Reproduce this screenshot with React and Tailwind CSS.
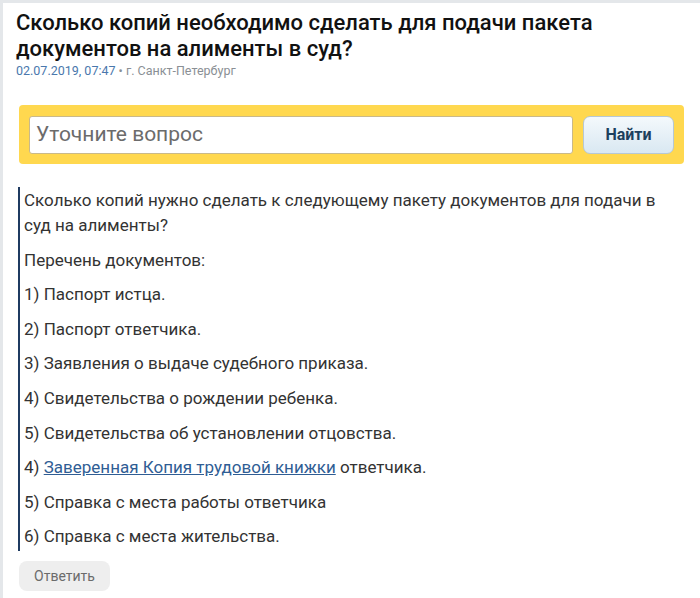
export default function App() {
  const items = [
    '1) Паспорт истца.',
    '2) Паспорт ответчика.',
    '3) Заявления о выдаче судебного приказа.',
    '4) Свидетельства о рождении ребенка.',
    '5) Свидетельства об установлении отцовства.',
  ]

  return (
    <div className="w-[700px] h-[598px] bg-white border-t-[3px] border-l-[3px] border-[#e4e7ea] overflow-hidden font-['Roboto',sans-serif]">
      {/* Заголовок */}
      <div className="pl-[13px] pr-4 pt-[7px]">
        <h1 className="text-[22px] leading-[26px] font-medium text-[#111]">
          Сколько копий необходимо сделать для подачи пакета документов на алименты в суд?
        </h1>
        <p className="mt-[2px] text-[12.5px] leading-[14px]">
          <span className="text-[#4a78ad]">02.07.2019, 07:47</span>
          <span className="text-[#8a8f95]"> • г. Санкт-Петербург</span>
        </p>
      </div>

      {/* Поиск */}
      <div className="ml-[16px] mr-[16px] mt-[27px] h-[59px] bg-[#ffd84f] rounded-[4px] flex items-center gap-[10px] px-[10px]">
        <div className="flex-1 h-[38px] bg-white border border-[#c9b98a] rounded-[3px] flex items-center px-[6px]">
          <span className="text-[21px] text-[#6b6b6b]">Уточните вопрос</span>
        </div>
        <button className="w-[91px] h-[38px] rounded-[7px] border border-[#b6c8d4] bg-gradient-to-b from-[#f4f9fc] to-[#d9e8f2] text-[16px] font-bold text-[#1d3f5e]">
          Найти
        </button>
      </div>

      {/* Текст вопроса */}
      <div className="ml-[15px] mt-[23px] mr-[30px] border-l-2 border-[#1f3b61] pl-[4px] pb-[2px] text-[17px] leading-[25px] text-[#333] flex flex-col gap-[9.6px] pt-[1px]">
        <p>Сколько копий нужно сделать к следующему пакету документов для подачи в суд на алименты?</p>
        <p>Перечень документов:</p>
        {items.map((t) => (
          <p key={t}>{t}</p>
        ))}
        <p>
          4){' '}
          <a href="#" className="text-[#2f5d94] underline">Заверенная Копия трудовой книжки</a>{' '}
          ответчика.
        </p>
        <p>5) Справка с места работы ответчика</p>
        <p>6) Справка с места жительства.</p>
      </div>

      {/* Ответить */}
      <div className="ml-[16px] mt-[10px]">
        <button className="w-[91px] h-[30px] rounded-[8px] bg-[#eeeeee] text-[14px] text-[#6b6b6b]">
          Ответить
        </button>
      </div>
    </div>
  )
}
